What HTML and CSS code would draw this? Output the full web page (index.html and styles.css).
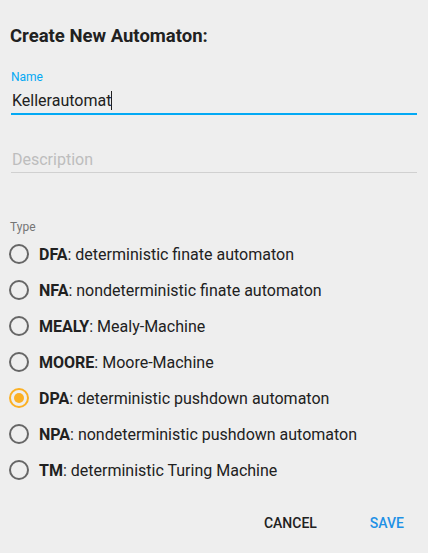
FILE: index.html
```html
<!DOCTYPE html>
<html lang="en">
<head>
  <meta charset="UTF-8">
  <meta name="viewport" content="width=device-width, initial-scale=1.0">
  <title>Create New Automaton</title>
  <link rel="stylesheet" href="styles.css">
</head>
<body>
  <div class="dialog">
    <h2 class="title">Create New Automaton:</h2>

    <div class="field focused">
      <label class="field-label">Name</label>
      <div class="field-input">Kellerautomat<span class="caret"></span></div>
    </div>

    <div class="field desc">
      <div class="field-input placeholder">Description</div>
    </div>

    <div class="group-label">Type</div>
    <div class="radios">
      <div class="radio"><span class="circle"></span><span><b>DFA</b>: deterministic finate automaton</span></div>
      <div class="radio"><span class="circle"></span><span><b>NFA</b>: nondeterministic finate automaton</span></div>
      <div class="radio"><span class="circle"></span><span><b>MEALY</b>: Mealy-Machine</span></div>
      <div class="radio"><span class="circle"></span><span><b>MOORE</b>: Moore-Machine</span></div>
      <div class="radio checked"><span class="circle"></span><span><b>DPA</b>: deterministic pushdown automaton</span></div>
      <div class="radio"><span class="circle"></span><span><b>NPA</b>: nondeterministic pushdown automaton</span></div>
      <div class="radio"><span class="circle"></span><span><b>TM</b>: deterministic Turing Machine</span></div>
    </div>

    <div class="actions">
      <button class="btn">CANCEL</button>
      <button class="btn primary">SAVE</button>
    </div>
  </div>
</body>
</html>
```

FILE: styles.css
```css
body {
  margin: 0;
  background: #eeeeee;
  font-family: Roboto, "Liberation Sans", sans-serif;
  color: #212121;
}
.dialog {
  padding: 24px 11px 0 10px;
}
.title {
  margin: 0;
  font-size: 18.5px;
  line-height: 24px;
  font-weight: 700;
}
.field {
  margin-left: 1px;
}
.focused {
  margin-top: 21px;
}
.field-label {
  display: block;
  font-size: 12px;
  line-height: 16px;
  color: #03a9f4;
}
.field-input {
  font-size: 16px;
  line-height: 20px;
  padding: 6px 1px 2px;
  border-bottom: 1px solid #d0d0d0;
}
.focused .field-input {
  border-bottom: 2px solid #03a9f4;
}
.caret {
  display: inline-block;
  width: 1px;
  height: 19px;
  background: #212121;
  vertical-align: -4px;
}
.desc {
  margin-top: 29px;
}
.placeholder {
  color: #bdbdbd;
}
.group-label {
  margin-top: 46px;
  font-size: 12px;
  line-height: 16px;
  color: #757575;
}
.radios {
  margin-top: 1px;
}
.radio {
  display: flex;
  align-items: center;
  gap: 10px;
  height: 36px;
  font-size: 16px;
}
.radio b {
  font-weight: 700;
}
.circle {
  box-sizing: border-box;
  width: 20px;
  height: 20px;
  margin-left: -1px;
  border: 2px solid #666666;
  border-radius: 50%;
  display: flex;
  align-items: center;
  justify-content: center;
}
.checked .circle {
  border-color: #fbb024;
}
.checked .circle::after {
  content: "";
  width: 10px;
  height: 10px;
  border-radius: 50%;
  background: #fbb024;
}
.actions {
  display: flex;
  justify-content: flex-end;
  gap: 27px;
  margin-top: 17px;
}
.btn {
  background: none;
  border: none;
  padding: 8px 13px;
  font-family: inherit;
  font-size: 14px;
  line-height: 20px;
  font-weight: 500;
  color: #212121;
  cursor: pointer;
}
.primary {
  color: #1e91e6;
}
```
